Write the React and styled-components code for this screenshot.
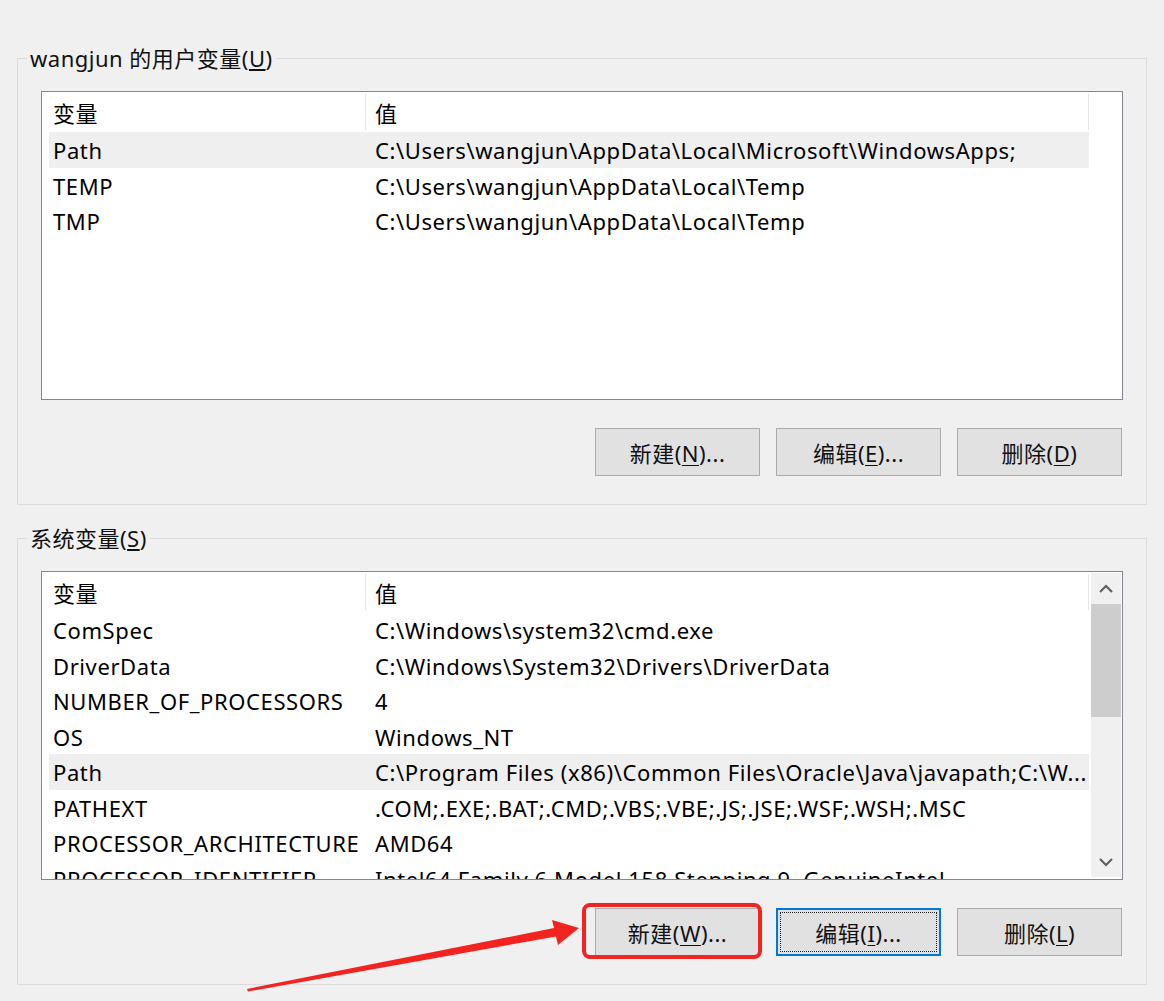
import React from 'react'
import styled, { createGlobalStyle, css } from 'styled-components'

const GlobalStyle = createGlobalStyle`
    html, body {
        margin: 0;
        background: #f0f0f0;
    }
    body {
        font-family: 'Noto Sans', 'Noto Sans CJK SC', sans-serif;
        color: #000;
        letter-spacing: 0.5px;
    }
`

const Page = styled.div`
    position: relative;
    width: 1164px;
    height: 1001px;
    box-sizing: border-box;
    padding: 44px 17px 0 17px;
    overflow: hidden;
`

const Group = styled.fieldset`
    margin: 0;
    min-width: 0;
    border: 1px solid #dcdcdc;
    padding: 19px 23px 28px 23px;

    & + & {
        margin-top: 19px;
    }
`

const Legend = styled.legend`
    margin-left: -14px;
    padding: 0 3px;
    font-size: 22px;
    line-height: 28px;
    color: #111;
`

const List = styled.div`
    display: flex;
    height: 309px;
    box-sizing: border-box;
    border: 1px solid #828790;
    background: #fff;
    padding-left: 7px;
    overflow: hidden;
`

const Table = styled.div`
    width: 1040px;
    flex: none;
`

const Header = styled.div`
    display: grid;
    grid-template-columns: 316px 724px;
    height: 36px;
    margin: 2px 0;
    font-size: 22px;
    line-height: 36px;
`

const HeadCell = styled.div`
    padding-top: 3px;
    padding-left: ${p => (p.$first ? '4px' : '9px')};
    border-left: ${p => (p.$first ? 'none' : '1px solid #e5e5e5')};
    border-right: ${p => (p.$last ? '1px solid #e5e5e5' : 'none')};
    line-height: 33px;
`

const Row = styled.div`
    display: grid;
    grid-template-columns: 316px 724px;
    height: 35.5px;
    line-height: 37px;
    font-size: 22px;
    letter-spacing: 0.6px;
    white-space: nowrap;
    background: ${p => (p.$active ? '#efefef' : 'transparent')};
`

const Cell = styled.div`
    overflow: hidden;
    padding-left: ${p => (p.$first ? '4px' : '10px')};
`

const Scrollbar = styled.div`
    width: 30px;
    margin: 1px 1px 2px 2px;
    background: #f0f0f0;
    display: flex;
    flex-direction: column;
`

const ScrollButton = styled.div`
    height: 31px;
    display: flex;
    align-items: center;
    justify-content: center;
    flex: none;
`

const Thumb = styled.div`
    height: 113px;
    background: #cdcdcd;
    flex: none;
`

const Track = styled.div`
    flex: 1;
`

const ButtonRow = styled.div`
    display: flex;
    justify-content: flex-end;
    gap: 16px;
    margin-top: 28px;
    padding-right: 1px;
`

const Button = styled.button`
    position: relative;
    width: 165px;
    height: 48px;
    box-sizing: border-box;
    border: 1px solid #adadad;
    background: #e1e1e1;
    font-family: inherit;
    font-size: 22px;
    letter-spacing: 0.5px;
    color: #111;
    padding: 0;

    u {
        text-underline-offset: 3px;
        text-decoration-thickness: 1px;
    }

    ${p =>
        p.$focused &&
        css`
            border: 2px solid #0078d7;
            &::after {
                content: '';
                position: absolute;
                inset: 2px;
                border: 1px dotted #222;
            }
        `}

    ${p =>
        p.$marked &&
        css`
            &::before {
                content: '';
                position: absolute;
                left: -14px;
                right: -3px;
                top: -6px;
                bottom: -4px;
                border: 4px solid #f3231f;
                border-radius: 8px;
            }
        `}
`

const Arrow = styled.svg`
    position: absolute;
    left: 0;
    top: 0;
    pointer-events: none;
`

const Chevron = ({ up }) => (
    <svg width="16" height="10" viewBox="0 0 16 10">
        <path
            d={up ? 'M2 8 L8 2 L14 8' : 'M2 2 L8 8 L14 2'}
            fill="none"
            stroke="#606060"
            strokeWidth="2.2"
        />
    </svg>
)

const userVars = [
    ['Path', 'C:\\Users\\wangjun\\AppData\\Local\\Microsoft\\WindowsApps;', true],
    ['TEMP', 'C:\\Users\\wangjun\\AppData\\Local\\Temp'],
    ['TMP', 'C:\\Users\\wangjun\\AppData\\Local\\Temp']
]

const systemVars = [
    ['ComSpec', 'C:\\Windows\\system32\\cmd.exe'],
    ['DriverData', 'C:\\Windows\\System32\\Drivers\\DriverData'],
    ['NUMBER_OF_PROCESSORS', '4'],
    ['OS', 'Windows_NT'],
    ['Path', 'C:\\Program Files (x86)\\Common Files\\Oracle\\Java\\javapath;C:\\W...', true],
    ['PATHEXT', '.COM;.EXE;.BAT;.CMD;.VBS;.VBE;.JS;.JSE;.WSF;.WSH;.MSC'],
    ['PROCESSOR_ARCHITECTURE', 'AMD64'],
    ['PROCESSOR_IDENTIFIER', 'Intel64 Family 6 Model 158 Stepping 9, GenuineIntel']
]

const VarTable = ({ rows }) => (
    <Table>
        <Header>
            <HeadCell $first>变量</HeadCell>
            <HeadCell $last>值</HeadCell>
        </Header>
        {rows.map(([name, value, active]) => (
            <Row key={name} $active={active}>
                <Cell $first>{name}</Cell>
                <Cell>{value}</Cell>
            </Row>
        ))}
    </Table>
)

export default function App() {
    return (
        <>
            <GlobalStyle />
            <Page>
                <Group>
                    <Legend>
                        wangjun 的用户变量(<u>U</u>)
                    </Legend>
                    <List>
                        <VarTable rows={userVars} />
                    </List>
                    <ButtonRow>
                        <Button>
                            新建(<u>N</u>)...
                        </Button>
                        <Button>
                            编辑(<u>E</u>)...
                        </Button>
                        <Button>
                            删除(<u>D</u>)
                        </Button>
                    </ButtonRow>
                </Group>
                <Group>
                    <Legend>
                        系统变量(<u>S</u>)
                    </Legend>
                    <List>
                        <VarTable rows={systemVars} />
                        <Scrollbar>
                            <ScrollButton>
                                <Chevron up />
                            </ScrollButton>
                            <Thumb />
                            <Track />
                            <ScrollButton>
                                <Chevron />
                            </ScrollButton>
                        </Scrollbar>
                    </List>
                    <ButtonRow>
                        <Button $marked>
                            新建(<u>W</u>)...
                        </Button>
                        <Button $focused>
                            编辑(<u>I</u>)...
                        </Button>
                        <Button>
                            删除(<u>L</u>)
                        </Button>
                    </ButtonRow>
                </Group>
                <Arrow width="1164" height="1001" viewBox="0 0 1164 1001">
                    <polygon
                        points="248,991.5 556,936.5 558,945 579,928 552,920 554,928 247,989"
                        fill="#f3231f"
                    />
                </Arrow>
            </Page>
        </>
    )
}
